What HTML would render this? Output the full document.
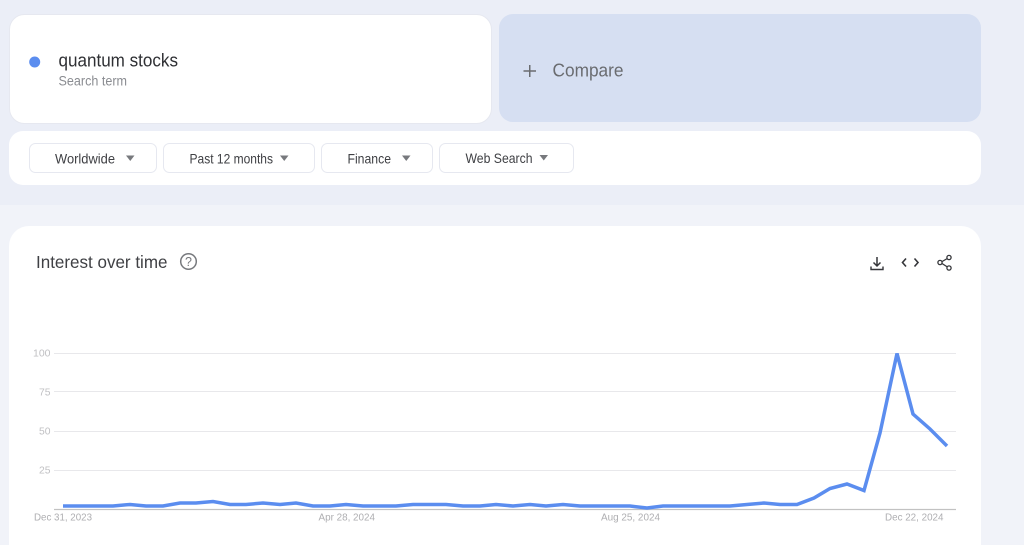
<!DOCTYPE html>
<html lang="en">
<head>
<meta charset="utf-8">
<title>Interest over time</title>
<style>
html,body{margin:0;padding:0;width:1024px;height:545px;overflow:hidden;background:#f1f3f9}
svg{display:block;position:absolute;left:0;top:0}
text{font-family:"Liberation Sans",sans-serif}
</style>
</head>
<body>
<svg width="1024" height="545" viewBox="0 0 1024 545" xmlns="http://www.w3.org/2000/svg">
  <rect x="0" y="0" width="1024" height="205" fill="#ebeef7"/>
  <rect x="0" y="205" width="1024" height="340" fill="#f1f3f9"/>

  <!-- search term card -->
  <rect x="9.5" y="14.500" width="482" height="109" rx="15" fill="#fff" stroke="#e6e8f0"/>
  <circle cx="34.700" cy="62" r="5.500" fill="#5b8def"/>
  <text x="58.500" y="66.500" font-size="18.500" fill="#2f3034" textLength="119.500" lengthAdjust="spacingAndGlyphs">quantum stocks</text>
  <text x="58.500" y="85.500" font-size="13.500" fill="#8a8c91" textLength="68.500" lengthAdjust="spacingAndGlyphs">Search term</text>

  <!-- compare card -->
  <rect x="499" y="14" width="482" height="108" rx="14" fill="#d6dff2"/>
  <path d="M523.500 71H536M529.750 65V77" stroke="#6a6c70" stroke-width="1.500" fill="none"/>
  <text x="552.500" y="76.500" font-size="18.500" fill="#6a6c70" textLength="71" lengthAdjust="spacingAndGlyphs">Compare</text>

  <!-- filter row -->
  <rect x="9" y="131" width="972" height="54" rx="14" fill="#fff"/>
  <rect x="29.500" y="143.500" width="127" height="29" rx="6" fill="#fff" stroke="#e6e8f0"/>
  <text x="55" y="163.300" font-size="14" fill="#3f4044" textLength="60" lengthAdjust="spacingAndGlyphs">Worldwide</text>
  <path d="M126 155.500H134.500L130.250 161Z" fill="#77797d"/>
  <rect x="163.500" y="143.500" width="151" height="29" rx="6" fill="#fff" stroke="#e6e8f0"/>
  <text x="189.500" y="163.300" font-size="14" fill="#3f4044" textLength="83.500" lengthAdjust="spacingAndGlyphs">Past 12 months</text>
  <path d="M280 155.500H288.500L284.250 161Z" fill="#77797d"/>
  <rect x="321.500" y="143.500" width="111" height="29" rx="6" fill="#fff" stroke="#e6e8f0"/>
  <text x="347.500" y="163.300" font-size="14" fill="#3f4044" textLength="43.500" lengthAdjust="spacingAndGlyphs">Finance</text>
  <path d="M402 155.500H410.500L406.250 161Z" fill="#77797d"/>
  <rect x="439.500" y="143.500" width="134" height="29" rx="6" fill="#fff" stroke="#e6e8f0"/>
  <text x="465.500" y="163" font-size="14" fill="#3f4044" textLength="67" lengthAdjust="spacingAndGlyphs">Web Search</text>
  <path d="M539.500 155H548L543.750 160.500Z" fill="#77797d"/>

  <!-- chart card -->
  <path d="M9 545V246A20 20 0 0 1 29 226H961A20 20 0 0 1 981 246V545Z" fill="#fff"/>
  <text x="36" y="268" font-size="17.500" fill="#3f4044" textLength="131.500" lengthAdjust="spacingAndGlyphs">Interest over time</text>
  <circle cx="188.500" cy="261.500" r="7.800" fill="none" stroke="#77797d" stroke-width="1.500"/>
  <text x="188.500" y="266" font-size="12.500" fill="#77797d" text-anchor="middle">?</text>

  <!-- download -->
  <path d="M877 257V266M873.500 262.500L877 266L880.500 262.500" fill="none" stroke="#35363a" stroke-width="1.500"/>
  <path d="M871 266.500V269.500H883V266.500" fill="none" stroke="#35363a" stroke-width="1.400"/>
  <!-- embed -->
  <path d="M906 258.500L902.500 262.500L906 266.500M914.500 258.500L918 262.500L914.500 266.500" fill="none" stroke="#35363a" stroke-width="1.600"/>
  <!-- share -->
  <path d="M949 257.500L940.500 262.500L949 268" fill="none" stroke="#35363a" stroke-width="1.300"/>
  <circle cx="949" cy="257.500" r="2.100" fill="#fff" stroke="#35363a" stroke-width="1.300"/>
  <circle cx="940" cy="262.500" r="2.100" fill="#fff" stroke="#35363a" stroke-width="1.300"/>
  <circle cx="949" cy="268" r="2.100" fill="#fff" stroke="#35363a" stroke-width="1.300"/>

  <!-- grid -->
  <g stroke="#e8e8eb" stroke-width="1">
    <path d="M54 353.500H956"/>
    <path d="M54 391.500H956"/>
    <path d="M54 431.500H956"/>
    <path d="M54 470.500H956"/>
  </g>
  <path d="M54 509.500H956" stroke="#c2c2c2" stroke-width="1.200"/>

  <g font-size="10.500" fill="#c0c0c3">
    <text x="33" y="356.500" textLength="17.500" lengthAdjust="spacingAndGlyphs">100</text>
    <text x="39" y="395.500" textLength="11.500" lengthAdjust="spacingAndGlyphs">75</text>
    <text x="39" y="434.500" textLength="11.500" lengthAdjust="spacingAndGlyphs">50</text>
    <text x="39" y="473.500" textLength="11.500" lengthAdjust="spacingAndGlyphs">25</text>
  </g>
  <g font-size="10.500" fill="#aeaeb1">
    <text x="34" y="520.500" textLength="58" lengthAdjust="spacingAndGlyphs">Dec 31, 2023</text>
    <text x="318.500" y="520.500" textLength="56.500" lengthAdjust="spacingAndGlyphs">Apr 28, 2024</text>
    <text x="601" y="520.500" textLength="59" lengthAdjust="spacingAndGlyphs">Aug 25, 2024</text>
    <text x="885" y="520.500" textLength="58.500" lengthAdjust="spacingAndGlyphs">Dec 22, 2024</text>
  </g>

  <!-- series -->
  <polyline fill="none" stroke="#5b8def" stroke-width="3.500" stroke-linejoin="miter" points="63,506 80,506 96,506 113,506 130,504.500 146,506 163,506 180,503 196,503 213,501.500 230,504.500 246,504.500 263,503 280,504.500 296,503 313,506 330,506 346,504.500 363,506 380,506 396,506 413,504.500 430,504.500 446,504.500 463,506 480,506 496,504.500 513,506 530,504.500 546,506 563,504.500 580,506 596,506 613,506 630,506 647,508 663,506 680,506 696,506 713,506 730,506 747,504.500 764,503 780,504.500 797,504.500 814,498 830,488.500 847,484 864,490.500 880,433 897,353.500 913,414 930,429 947,446"/>
</svg>
</body>
</html>
